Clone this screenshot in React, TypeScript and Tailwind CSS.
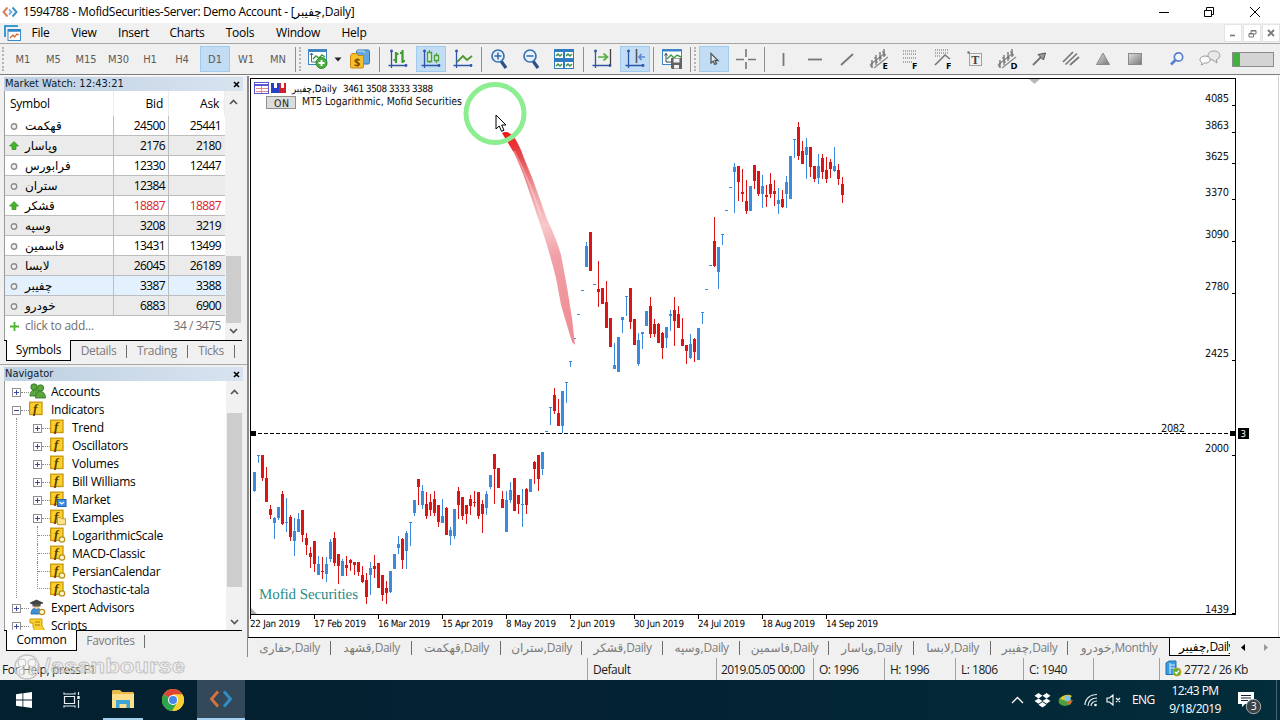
import type { ReactNode } from 'react';
import clsx from 'clsx';

type Candle = [high: number, low: number, top: number, bottom: number, color: 'r' | 'b'];

interface Segment {
  start: number;
  originY: number;
  rows: Candle[];
}

// Candle values are in thirds of a pixel below originY
const segments: Segment[] = [
  {
    start: 0,
    originY: 430,
    rows: [
      [126, 186, 126, 183, 'b'], [76, 100, 76, 79, 'b'], [76, 155, 76, 146, 'r'], [110, 215, 144, 215, 'r'],
      [225, 266, 237, 255, 'r'], [260, 326, 264, 278, 'b'], [232, 272, 232, 266, 'b'], [183, 285, 192, 282, 'r'],
      [205, 307, 276, 280, 'b'], [255, 334, 261, 320, 'r'], [265, 380, 303, 332, 'b'], [250, 308, 268, 308, 'b'],
      [240, 335, 240, 314, 'r'], [309, 376, 323, 344, 'r'], [352, 416, 369, 381, 'r'], [333, 426, 333, 402, 'r'],
      [378, 434, 402, 434, 'b'], [381, 446, 423, 426, 'r'], [380, 455, 402, 432, 'b'], [326, 396, 336, 387, 'b'],
      [306, 408, 323, 399, 'r'], [372, 461, 372, 408, 'r'], [388, 437, 393, 437, 'b'], [378, 437, 405, 413, 'r'],
      [387, 423, 390, 399, 'r'], [396, 434, 396, 405, 'r'], [396, 437, 396, 426, 'r'], [408, 458, 435, 456, 'r'],
      [430, 524, 450, 500, 'r'], [396, 494, 413, 434, 'b'], [375, 444, 407, 416, 'r'], [399, 473, 399, 473, 'r'],
      [435, 512, 435, 494, 'r'], [453, 521, 474, 489, 'r'], [423, 488, 423, 486, 'b'], [372, 416, 372, 416, 'b'],
      [318, 372, 342, 354, 'b'], [323, 416, 326, 389, 'r'], [303, 416, 309, 362, 'b'], [277, 350, 277, 280, 'b'],
      [210, 257, 210, 248, 'b'], [147, 224, 147, 170, 'r'], [165, 236, 182, 224, 'b'], [186, 266, 222, 258, 'r'],
      [192, 257, 216, 240, 'r'], [183, 257, 207, 248, 'r'], [225, 290, 225, 275, 'r'],
    ],
  },
  {
    start: 47,
    originY: 220,
    rows: [
      [836, 908, 888, 908, 'b'], [861, 945, 864, 945, 'r'], [920, 973, 930, 948, 'b'], [867, 956, 867, 947, 'b'],
      [800, 896, 813, 855, 'r'], [831, 900, 831, 887, 'r'], [855, 911, 855, 882, 'r'], [825, 885, 837, 858, 'r'],
      [812, 861, 846, 849, 'r'], [816, 896, 816, 888, 'r'], [840, 938, 852, 882, 'r'], [813, 886, 822, 864, 'b'],
      [765, 807, 765, 801, 'b'], [702, 852, 702, 747, 'r'], [744, 804, 744, 804, 'r'], [812, 864, 837, 864, 'r'],
      [812, 936, 840, 936, 'b'], [786, 848, 810, 840, 'b'], [774, 873, 774, 873, 'r'], [825, 881, 825, 852, 'r'],
      [808, 921, 852, 855, 'b'], [804, 881, 807, 855, 'r'], [777, 815, 777, 815, 'b'], [724, 792, 726, 747, 'r'],
      [705, 812, 705, 776, 'r'], [696, 766, 696, 747, 'b'], [633, 636, 633, 636, 'b'], [561, 614, 561, 564, 'b'],
      [503, 581, 525, 573, 'r'], [536, 618, 579, 618, 'r'], [513, 639, 513, 618, 'b'], [486, 548, 486, 489, 'b'],
      [424, 443, 424, 427, 'b'], [354, 357, 354, 357, 'b'], [282, 285, 282, 285, 'b'], [210, 213, 210, 213, 'b'],
      [66, 140, 78, 140, 'b'], [36, 153, 36, 153, 'r'], [192, 195, 192, 195, 'b'], [123, 262, 207, 216, 'r'],
      [204, 252, 204, 252, 'r'], [182, 324, 246, 324, 'r'], [294, 381, 294, 381, 'r'], [368, 446, 435, 446, 'b'],
      [351, 455, 351, 455, 'b'], [291, 339, 291, 300, 'b'], [228, 289, 228, 231, 'b'], [204, 326, 204, 305, 'r'],
      [297, 375, 297, 375, 'r'], [338, 438, 360, 432, 'b'], [336, 388, 336, 341, 'b'], [273, 318, 273, 318, 'b'],
      [231, 354, 258, 342, 'r'], [297, 351, 312, 342, 'r'], [309, 369, 312, 369, 'r'], [336, 416, 339, 384, 'r'],
      [321, 384, 321, 353, 'b'], [270, 332, 283, 288, 'b'], [231, 377, 270, 303, 'r'], [258, 323, 282, 323, 'r'],
      [294, 377, 357, 377, 'r'], [375, 432, 375, 392, 'r'], [342, 418, 372, 413, 'b'], [354, 426, 357, 396, 'r'],
      [324, 420, 324, 420, 'b'], [276, 312, 276, 279, 'b'], [207, 210, 207, 210, 'b'], [135, 138, 135, 138, 'b'],
    ],
  },
  {
    start: 115,
    originY: 110,
    rows: [
      [321, 470, 393, 468, 'r'], [411, 536, 411, 486, 'b'], [372, 405, 372, 375, 'b'], [300, 303, 300, 303, 'b'],
      [231, 234, 231, 234, 'b'], [159, 309, 171, 186, 'b'], [168, 272, 168, 216, 'r'], [177, 275, 246, 251, 'r'],
      [210, 311, 273, 302, 'r'], [228, 302, 228, 302, 'b'], [165, 238, 165, 213, 'r'], [183, 257, 183, 251, 'r'],
      [194, 293, 228, 252, 'b'], [225, 291, 255, 260, 'r'], [189, 264, 222, 251, 'r'], [210, 288, 243, 252, 'r'],
      [234, 311, 270, 282, 'b'], [240, 293, 267, 291, 'r'], [198, 293, 216, 251, 'b'], [138, 267, 138, 267, 'b'],
      [87, 144, 87, 90, 'b'], [36, 150, 51, 138, 'r'], [93, 161, 123, 161, 'r'], [84, 206, 111, 135, 'b'],
      [111, 201, 111, 171, 'r'], [168, 215, 168, 207, 'r'], [132, 222, 168, 204, 'b'], [132, 206, 144, 186, 'r'],
      [141, 218, 180, 207, 'r'], [147, 204, 156, 177, 'r'], [110, 186, 168, 183, 'b'], [162, 224, 180, 207, 'r'],
      [201, 278, 222, 255, 'r'],
    ],
  },
];

const prices = [
  { label: '4085', y: 98 },
  { label: '3863', y: 125 },
  { label: '3625', y: 156 },
  { label: '3370', y: 192 },
  { label: '3090', y: 234 },
  { label: '2780', y: 286 },
  { label: '2425', y: 353 },
  { label: '2000', y: 448 },
  { label: '1439', y: 609 },
];

const dates = [
  { label: '22 Jan 2019', w: 50 },
  { label: '17 Feb 2019', w: 52 },
  { label: '16 Mar 2019', w: 52 },
  { label: '15 Apr 2019', w: 51 },
  { label: '8 May 2019', w: 50 },
  { label: '2 Jun 2019', w: 45 },
  { label: '30 Jun 2019', w: 50 },
  { label: '24 Jul 2019', w: 47 },
  { label: '18 Aug 2019', w: 53 },
  { label: '14 Sep 2019', w: 52 },
];

const quotes = [
  { name: 'قهکمت', bid: '24500', ask: '25441' },
  { name: 'وپاسار', bid: '2176', ask: '2180', up: true },
  { name: 'فرابورس', bid: '12330', ask: '12447' },
  { name: 'ستران', bid: '12384', ask: '' },
  { name: 'قشکر', bid: '18887', ask: '18887', up: true, red: true },
  { name: 'وسپه', bid: '3208', ask: '3219' },
  { name: 'فاسمین', bid: '13431', ask: '13499' },
  { name: 'لابسا', bid: '26045', ask: '26189' },
  { name: 'چفیبر', bid: '3387', ask: '3388', selected: true },
  { name: 'خودرو', bid: '6883', ask: '6900' },
];

const indicators = [
  { name: 'Trend', leaf: false },
  { name: 'Oscillators', leaf: false },
  { name: 'Volumes', leaf: false },
  { name: 'Bill Williams', leaf: false },
  { name: 'Market', leaf: false, badge: 'market' },
  { name: 'Examples', leaf: false, badge: 'folder' },
  { name: 'LogarithmicScale', leaf: true, badge: 'dot' },
  { name: 'MACD-Classic', leaf: true, badge: 'dot' },
  { name: 'PersianCalendar', leaf: true, badge: 'dot' },
  { name: 'Stochastic-tala', leaf: true, badge: 'dot', last: true },
];

const chartTabs = [
  { label: 'حفاری,Daily', width: 'w-[83px]' },
  { label: 'قشهد,Daily', width: 'w-[81px]' },
  { label: 'قهکمت,Daily', width: 'w-[89px]' },
  { label: 'ستران,Daily', width: 'w-[81px]' },
  { label: 'قشکر,Daily', width: 'w-[81px]' },
  { label: 'وسپه,Daily', width: 'w-[77px]' },
  { label: 'فاسمین,Daily', width: 'w-[89px]' },
  { label: 'وپاسار,Daily', width: 'w-[85px]' },
  { label: 'لابسا,Daily', width: 'w-[77px]' },
  { label: 'چفیبر,Daily', width: 'w-[77px]' },
  { label: 'خودرو,Monthly', width: 'w-[101px]' },
];

const SLATE = '#3a4a9a';

function Slot({ w = 'w-8', active = false, children }: { w?: string; active?: boolean; children: ReactNode }) {
  return (
    <div className={clsx('flex h-full shrink-0 items-center justify-center', w)}>
      <div
        className={clsx(
          'flex h-[26px] w-[30px] items-center justify-center',
          active && 'border border-[#9fcbee] bg-[#c1dcf3]'
        )}
      >
        {children}
      </div>
    </div>
  );
}

function Sep({ w }: { w: string }) {
  return (
    <div className={clsx('flex shrink-0 justify-center', w)}>
      <div className="h-[25px] w-px bg-[#8f8f8f]" />
    </div>
  );
}

function Grip() {
  return <div className="h-[24px] w-[3px] shrink-0 border-l-2 border-dotted border-[#b4b4b4]" />;
}

function Icon({ size = 20, children }: { size?: number; children: ReactNode }) {
  return (
    <svg width={size} height={size} viewBox={`0 0 ${size} ${size}`} fill="none" className="shrink-0">
      {children}
    </svg>
  );
}

// Blue L-shaped axes shared by the chart-type buttons
function Axes() {
  return (
    <g stroke="#2f55a8" strokeWidth="1.3" fill="#2f55a8">
      <path d="M3.5 1.5V19M.5 16.5H18" />
      <circle cx="3.5" cy="2" r=".8" />
      <circle cx="18" cy="16.5" r=".8" />
    </g>
  );
}

function MetaLogo({ size }: { size: number }) {
  return (
    <svg width={size} height={size} viewBox="0 0 24 24" fill="none" strokeWidth="2.800">
      <path d="M9 4.500 2.500 12 9 19.500" stroke="#d9713f" />
      <path d="M15 4.500 21.500 12 15 19.500" stroke="#2f8fc8" />
    </svg>
  );
}

function TitleBar() {
  return (
    <div className="flex h-[23px] shrink-0 items-center bg-white">
      <svg width="16" height="12" viewBox="0 0 16 12" fill="none" className="ml-[2px]" strokeWidth="1.9">
        <path d="M5.500 1.500 1.500 6l4 4.500" stroke="#e27a50" />
        <path d="M10.500 1.500 14.500 6l-4 4.500" stroke="#3b8fc6" />
        <path d="M7 3.500 9.500 6 7 8.500" stroke="#76b2d8" />
      </svg>
      <span className="ml-[5px] whitespace-nowrap text-[12px] tracking-[-0.026em]">
        1594788 - MofidSecurities-Server: Demo Account - [چفیبر,Daily]
      </span>
      <div className="ml-auto flex items-center">
        <svg width="120" height="20" viewBox="1148 0 120 20" fill="none" stroke="#000">
          <path d="M1159 10.500h10" />
          <path d="M1204.500 8.500h7v6h-7zM1206.500 8v-2.500h7v7h-2" />
          <path d="M1250 5l10 10M1260 5l-10 10" />
        </svg>
        <div className="w-[12px]" />
      </div>
    </div>
  );
}

function MenuBar() {
  const items = [
    { label: 'File', width: 'w-[35px]' },
    { label: 'View', width: 'w-[52px]' },
    { label: 'Insert', width: 'w-[47px]' },
    { label: 'Charts', width: 'w-[60px]' },
    { label: 'Tools', width: 'w-[46px]' },
    { label: 'Window', width: 'w-[70px]' },
    { label: 'Help', width: 'w-[42px]' },
  ];
  return (
    <div className="flex h-[21px] shrink-0 items-center border-b border-[#a5a5a5] bg-[#f0f0f0]">
      <svg width="18" height="17" viewBox="0 0 18 17" fill="none" className="ml-[4px]">
        <path d="M1 12V1h13" stroke="#3a9ad2" strokeWidth="2" />
        <rect x="4" y="4.500" width="12.500" height="11" fill="#fff" stroke="#3a8cc8" />
        <path d="M4 5.500h12.500" stroke="#2f86c6" strokeWidth="2.500" />
        <path d="m6 13 3-3 1.500 2L13 9l2 1" stroke="#d86a3a" strokeWidth="1.300" />
      </svg>
      <div className="flex pl-[1px] text-[12px] tracking-[-0.02em]">
        {items.map((item) => (
          <span key={item.label} className={clsx('text-center', item.width)}>
            {item.label}
          </span>
        ))}
      </div>
      <div className="ml-auto flex gap-px">
        <div className="flex h-[18px] w-[18px] items-center justify-center border border-[#e4e4e4] bg-white">
          <svg width="8" height="8" fill="none" stroke="#777" strokeWidth="1.600"><path d="M1 6.500h5" /></svg>
        </div>
        <div className="flex h-[18px] w-[18px] items-center justify-center border border-[#e4e4e4] bg-white">
          <svg width="9" height="9" fill="none" stroke="#777"><path d="M1 4.500h4.500V8H1zM3 4V1.500h5V5H6M3 2h5M1 5h4" /></svg>
        </div>
        <div className="flex h-[18px] w-[18px] items-center justify-center border border-[#e4e4e4] bg-white">
          <svg width="8" height="8" fill="none" stroke="#777" strokeWidth="1.800"><path d="m1 1 6 6M7 1 1 7" /></svg>
        </div>
      </div>
    </div>
  );
}

function EquiDistant({ letter }: { letter: string }) {
  return (
    <Icon size={22}>
      <path d="M2 17 17 5M6 20 20 9" stroke="#8a8a8a" strokeWidth="1.300" />
      <path d="M4 12v8M2 18h2M8 7v10M6 10h2M8 14h2M12 4v9M12 10h2M16 1v8M14 4h2M16 7h2" stroke="#666" strokeWidth="1.200" />
      <text x="14.500" y="20.500" fontSize="9.500" fontWeight="bold" fill="#000">{letter}</text>
    </Icon>
  );
}

function Toolbar() {
  const frames = [
    { label: 'M1', width: 'w-[30px]' },
    { label: 'M5', width: 'w-[31px]' },
    { label: 'M15', width: 'w-[34px]' },
    { label: 'M30', width: 'w-[31px]' },
    { label: 'H1', width: 'w-[32px]' },
    { label: 'H4', width: 'w-[32px]' },
  ];
  return (
    <div className="flex h-[31px] shrink-0 items-center border-b border-[#7c7c7c] bg-[#f0f0f0]">
      <div className="w-[2px]" />
      <Grip />
      <div className="flex items-center pl-[3px] font-['DejaVu_Sans_Condensed','DejaVu_Sans',sans-serif] text-[11px] text-[#5a5a5a]">
        {frames.map((f) => (
          <span key={f.label} className={clsx('pt-[2px] text-center', f.width)}>{f.label}</span>
        ))}
        <span className="ml-[2px] flex h-[26px] w-[30px] items-center justify-center border border-[#9fcbee] bg-[#c1dcf3] pt-[3px]">D1</span>
        <span className="w-[32px] pt-[2px] text-center">W1</span>
        <span className="w-[32px] pt-[2px] text-center">MN</span>
      </div>
      <Sep w="w-[2px]" />
      <div className="w-[3px]" />
      <Grip />
      <Slot w="w-[32px]">
        <Icon size={22}>
          <rect x="1.500" y="1.500" width="18" height="15" fill="#fff" stroke="#3d85c4" />
          <path d="M1 3h19" stroke="#3d85c4" strokeWidth="2" />
          <path d="M4.500 5v9h8M3 7l1.500-2L6 7" stroke="#4a6a90" />
          <path d="m6 11 3-3 3 2 3-3 3 2" stroke="#3c9a3c" strokeWidth="1.400" />
          <circle cx="14.500" cy="15" r="5.500" fill="#4cae3f" stroke="#2f8a2c" />
          <path d="M11.500 15h6M14.500 12v6" stroke="#fff" strokeWidth="1.800" />
        </Icon>
      </Slot>
      <svg width="8" height="5" viewBox="0 0 8 5"><path d="M.5.5h7L4 4.500z" fill="#222" /></svg>
      <Slot w="w-[36px]">
        <Icon size={22}>
          <rect x="7.500" y="2" width="13" height="14" rx="1.500" fill="#64a8e0" stroke="#2f74b4" />
          <path d="M8 3h7l1 2" stroke="#c6e2f8" />
          <path d="M1.500 7.500 3 5.500h5l1 2h5.500V19a1 1 0 0 1-1 1h-11a1 1 0 0 1-1-1z" fill="#f5c02c" stroke="#c58a12" />
          <text x="5" y="18" fontSize="11" fontWeight="bold" fill="#7a4a00">$</text>
        </Icon>
      </Slot>
      <Sep w="w-[3px]" />
      <div className="w-px" />
      <Slot>
        <Icon>
          <Axes />
          <path d="M8 3v11M8 11H5.500M8 5h2.500M14.500 1v13M14.500 4H12M14.500 12H17" stroke="#3f9b2f" strokeWidth="2.200" />
        </Icon>
      </Slot>
      <div className="w-px" />
      <Slot active>
        <Icon>
          <Axes />
          <path d="M8.500 1v13M15.500 4v10" stroke="#4a9f3a" strokeWidth="1.200" />
          <path d="M6.500 3.500h4v9h-4zM13.500 6.500h4v5h-4z" fill="#d8f0d0" stroke="#4a9f3a" strokeWidth="1.300" />
        </Icon>
      </Slot>
      <Slot>
        <Icon>
          <Axes />
          <path d="m4 13 6-6 4 4 5-4" stroke="#4a9a30" strokeWidth="1.800" />
        </Icon>
      </Slot>
      <Sep w="w-[4px]" />
      <Slot>
        <Icon>
          <path d="m12 12 5 7" stroke="#2d4f86" strokeWidth="3.200" />
          <circle cx="9" cy="7" r="6" fill="#e6f2fb" stroke="#3972b4" strokeWidth="1.700" />
          <path d="M5.500 7h7M9 3.500v7" stroke="#3466a8" strokeWidth="1.500" />
        </Icon>
      </Slot>
      <Slot>
        <Icon>
          <path d="m12 12 5 7" stroke="#2d4f86" strokeWidth="3.200" />
          <circle cx="9" cy="7" r="6" fill="#e6f2fb" stroke="#3972b4" strokeWidth="1.700" />
          <path d="M5.500 7h7" stroke="#3466a8" strokeWidth="1.500" />
        </Icon>
      </Slot>
      <Slot w="w-[33px]">
        <Icon>
          <rect x=".5" y=".5" width="19" height="19" fill="#fff" stroke="#2f7cc0" />
          <path d="M0 2h20M0 12h20M10 0v20M0 10h20" stroke="#2f7cc0" strokeWidth="2" />
          <path d="m2 7 2-2 2 2 2-2M12 7l2-2 2 2 2-2M2 17l2-2 2 2 2-2M12 17l2-2 2 2 2-2" stroke="#3d8f4a" strokeWidth="1.500" />
        </Icon>
      </Slot>
      <Sep w="w-[6px]" />
      <Slot>
        <Icon>
          <Axes />
          <path d="M18.500 0v16" stroke="#444" strokeWidth="1.300" />
          <path d="M6 8h8M11.500 4.500 15.500 8l-4 3.500" stroke="#55b045" strokeWidth="1.700" />
        </Icon>
      </Slot>
      <Slot w="w-[34px]" active>
        <Icon>
          <Axes />
          <path d="M11.500 0v14" stroke="#556" strokeWidth="1.600" />
          <path d="M20 8h-5M16.500 5 14 8l2.500 3" stroke="#5a86d0" strokeWidth="1.600" />
        </Icon>
      </Slot>
      <Sep w="w-[3px]" />
      <Slot w="w-[34px]">
        <Icon>
          <rect x=".5" y=".5" width="19" height="15" fill="#fff" stroke="#3d85c4" />
          <path d="M0 1.500h20" stroke="#3d85c4" strokeWidth="2" />
          <path d="M4 4v9h5M2.500 6.500 4 4.500l1.500 2" stroke="#345" />
          <path d="m5 10 4-4 3 3 3-3 4 2" stroke="#3d9a3f" strokeWidth="1.400" />
          <path d="M9 9h11v11H10l-1-1z" fill="#636363" />
          <path d="M11.500 9.500h6v4h-6zM12 16h5v3.500h-5z" fill="#f2f2f2" />
        </Icon>
      </Slot>
      <Sep w="w-[3px]" />
      <div className="w-[2px]" />
      <Grip />
      <div className="w-px" />
      <Slot active>
        <Icon size={16}>
          <path d="M5 2.500v9.500l2.200-1.800 1.600 3.300 1.700-.8L9 9.500h3z" fill="#e8edf3" stroke="#4d565e" strokeWidth="1.300" />
        </Icon>
      </Slot>
      <Slot w="w-[31px]">
        <Icon>
          <path d="M0 10.500h8M12 10.500h8M10 0v8M10 13v7" stroke="#777" strokeWidth="1.600" />
        </Icon>
      </Slot>
      <Sep w="w-[6px]" />
      <Slot><Icon><path d="M10.500 4v13" stroke="#777" strokeWidth="1.800" /></Icon></Slot>
      <Slot><Icon><path d="M3 10.500h14" stroke="#777" strokeWidth="1.800" /></Icon></Slot>
      <Slot><Icon><path d="M4 16 16 5" stroke="#777" strokeWidth="1.800" /></Icon></Slot>
      <Slot><EquiDistant letter="E" /></Slot>
      <Slot>
        <Icon size={22}>
          <path d="M3 3h14M3 6h14M3 10h14M3 14h9" stroke="#666" strokeDasharray="1 1" />
          <text x="12" y="20.500" fontSize="9.500" fontWeight="bold" fill="#000">F</text>
        </Icon>
      </Slot>
      <Slot>
        <Icon size={22}>
          <path d="M3 2h14M3 5h14M3 8h6" stroke="#666" strokeDasharray="1 1" />
          <path d="M3 17 13 7l5 4" stroke="#777" strokeWidth="1.600" />
          <text x="14" y="20.500" fontSize="9.500" fontWeight="bold" fill="#000">F</text>
        </Icon>
      </Slot>
      <Slot>
        <Icon size={18}>
          <rect x="3.500" y="3.500" width="12" height="12" stroke="#555" strokeDasharray="1 1" />
          <rect x="1.500" y="1.500" width="2" height="2" fill="#555" />
          <text x="5.300" y="14" fontSize="12" fontWeight="bold" fontFamily="Liberation Serif" fill="#444">T</text>
        </Icon>
      </Slot>
      <Slot><EquiDistant letter="D" /></Slot>
      <Slot>
        <Icon size={18}>
          <path d="M3 15 11 7" stroke="#777" strokeWidth="2" />
          <path d="M8 4.500 15.500 3 13.500 10z" fill="#999" stroke="#555" />
        </Icon>
      </Slot>
      <Slot>
        <Icon size={18}>
          <path d="M1 12 11 2M3.500 14.500 15 3.500M8 15l9-8" stroke="#777" strokeWidth="1.700" />
        </Icon>
      </Slot>
      <Slot>
        <Icon size={18}>
          <path d="M9 3 15.500 14.500h-13z" fill="url(#grey)" stroke="#8a8a8a" />
        </Icon>
      </Slot>
      <Slot>
        <Icon size={18}>
          <defs>
            <linearGradient id="grey" x1="0" y1="0" x2="1" y2="1">
              <stop offset="0" stopColor="#e0e0e0" />
              <stop offset="1" stopColor="#777" />
            </linearGradient>
          </defs>
          <rect x="2.500" y="3.500" width="13" height="11" fill="url(#grey)" stroke="#8a8a8a" />
        </Icon>
      </Slot>
      <div className="w-[10px]" />
      <Slot>
        <Icon size={18}>
          <path d="M7.500 10 3 14.500" stroke="#5a80cc" strokeWidth="2.600" />
          <circle cx="10.500" cy="7" r="4.200" fill="#f3f8ff" stroke="#5a80cc" strokeWidth="1.700" />
        </Icon>
      </Slot>
      <Slot w="w-[34px]">
        <Icon size={22}>
          <path d="M15 3c-4 0-6 2-6 4.500S11 12 14 12l4 3-.5-3.500c2-.7 3.300-2 3.300-4C20.800 5 19 3 15 3z" fill="#e8e8e8" stroke="#9a9a9a" />
          <path d="M6 8c-3 0-5 1.600-5 3.700 0 1.300.8 2.400 2 3L2.500 17l3-1.800c3.500 0 5.700-1.300 5.700-3.500S9 8 6 8z" fill="#fafafa" stroke="#9a9a9a" />
        </Icon>
      </Slot>
      <div className="ml-[5px] flex h-[15px] w-[42px] shrink-0 border border-[#8c8c8c] bg-[#d4d4d4]">
        <div className="w-[7px] bg-[#3fb13c]" />
      </div>
    </div>
  );
}

function PanelHeader({ title }: { title: string }) {
  return (
    <div className="mx-[4px] flex h-[14px] shrink-0 items-center justify-between bg-gradient-to-r from-[#bed0e2] to-[#d8e3ef] pl-px pr-[3px] font-['DejaVu_Sans_Condensed','DejaVu_Sans',sans-serif] text-[11px] text-[#0c1c2c]">
      <span className="whitespace-nowrap">{title}</span>
      <svg width="7" height="7" viewBox="0 0 7 7" stroke="#000" strokeWidth="1.600"><path d="m1 1 5 5M6 1 1 6" /></svg>
    </div>
  );
}

function Chevron({ up = false }: { up?: boolean }) {
  return (
    <svg width="9" height="6" viewBox="0 0 9 6" fill="none" stroke="#555" strokeWidth="1.700">
      <path d={up ? 'M1 5l3.500-3.500L8 5' : 'M1 1l3.500 3.500L8 1'} />
    </svg>
  );
}

function MarketWatch() {
  return (
    <div className="flex h-[289px] shrink-0 flex-col border-b border-[#a8a8a8] pt-px">
      <PanelHeader title="Market Watch: 12:43:21" />
      <div className="ml-[4px] flex h-[250px] w-[238px] shrink-0 border-b border-black bg-white">
        <div className="w-[221px] border-l border-[#9a9a9a] text-[12px] tracking-[-0.02em]">
          <div className="flex h-[25px] items-center">
            <span className="w-[108px] pl-[5px]">Symbol</span>
            <span className="h-full w-[55px] border-l border-[#ececec] pr-[5px] pt-[4px] text-right">Bid</span>
            <span className="h-full w-[57px] border-x border-[#ececec] pr-[5px] pt-[4px] text-right">Ask</span>
          </div>
          {quotes.map((q, i) => (
            <div
              key={q.name}
              className={clsx(
                'flex h-[20px] items-center border-b border-[#bdbdbd] tracking-[-0.05em]',
                q.selected ? 'bg-[#e2f1fd]' : i % 2 ? 'bg-[#ebebeb]' : 'bg-white',
                q.red && 'text-[#e01c24]'
              )}
            >
              <div className="flex w-[108px] items-center text-black">
                <svg width="10" height="10" viewBox="0 0 10 10" className="ml-[4px]">
                  {q.up ? (
                    <path d="M5 .5 9.500 5H7v3.500H3V5H.5z" fill="#44b42c" stroke="#2e8a20" strokeWidth=".7" />
                  ) : (
                    <circle cx="5" cy="5.500" r="2.700" fill="#f2f2f2" stroke="#8b8b8b" strokeWidth="1.400" />
                  )}
                </svg>
                <span className="ml-[6px] text-[12px] leading-[18px] tracking-normal">{q.name}</span>
              </div>
              <span className="h-[19px] w-[55px] border-l border-[#bdbdbd] pr-[3px] text-right leading-[20px]">{q.bid}</span>
              <span className="h-[19px] w-[56px] border-l border-[#bdbdbd] pr-[3px] text-right leading-[20px]">{q.ask}</span>
            </div>
          ))}
          <div className="flex h-[20px] items-center justify-between pr-[4px] text-[#6f6f6f]">
            <div className="flex items-center">
              <svg width="9" height="9" viewBox="0 0 9 9" className="ml-[5px]" stroke="#4cb52f" strokeWidth="1.800"><path d="M4.500 0v9M0 4.500h9" /></svg>
              <span className="ml-[6px]">click to add...</span>
            </div>
            <span className="tracking-[-0.04em]">34 / 3475</span>
          </div>
        </div>
        <div className="flex w-[17px] flex-col items-center bg-[#f1f1f1]">
          <div className="pt-[8px] leading-[0]"><Chevron up /></div>
          <div className="mt-[151px] h-[67px] w-[15px] bg-[#cdcdcd]" />
          <div className="mt-[5px] leading-[0]"><Chevron /></div>
        </div>
      </div>
      <div className="flex h-[20px] pl-[6px] text-[12px] tracking-[-0.03em] text-[#7b7b7b]">
        <div className="-mt-px flex w-[65px] items-center justify-center border-x border-b border-black bg-white tracking-[-0.02em] text-black">Symbols</div>
        <TabLabel w="w-[56px]">Details</TabLabel>
        <TabLabel w="w-[61px]">Trading</TabLabel>
        <TabLabel w="w-[47px]">Ticks</TabLabel>
      </div>
    </div>
  );
}

function TabLabel({ w, children }: { w: string; children: ReactNode }) {
  return (
    <div className={clsx('flex shrink-0 items-center text-[12px]', w)}>
      <span className="grow text-center leading-[18px]">{children}</span>
      <div className="h-[13px] w-px bg-[#6f6f6f]" />
    </div>
  );
}

function Expander({ open = false }: { open?: boolean }) {
  return (
    <svg width="9" height="9" viewBox="0 0 9 9" fill="none" className="relative shrink-0">
      <rect x=".5" y=".5" width="8" height="8" fill="#fff" stroke="#919191" />
      <path d={open ? 'M2 4.500h5' : 'M2 4.500h5M4.500 2v5'} stroke={SLATE} />
    </svg>
  );
}

function FIcon({ badge }: { badge?: string }) {
  return (
    <svg width="16" height="16" viewBox="0 0 16 16" className="shrink-0 overflow-visible">
      <rect x=".7" y="1.200" width="12.300" height="12.300" fill="#fbd12c" stroke="#c9960c" strokeWidth="1.300" />
      <text x="4" y="11.500" fontFamily="Liberation Serif" fontSize="13" fontStyle="italic" fontWeight="bold" fill="#5a3a00">f</text>
      {badge === 'dot' && <circle cx="12" cy="12.500" r="2.700" fill="#fff6cf" stroke="#b5901c" strokeWidth="1.200" />}
      {badge === 'market' && (
        <g>
          <rect x="7.500" y="8.500" width="8.500" height="7" fill="#3f8be8" stroke="#2563b8" />
          <path d="m9.500 11 2.300 2 2.300-2" fill="none" stroke="#fff" strokeWidth="1.200" />
        </g>
      )}
      {badge === 'folder' && <path d="M7.500 8.500h3l1 1.200h4v6h-8z" fill="#ffe28a" stroke="#c59a2c" />}
    </svg>
  );
}

function RootRow({ icon, label, open = false }: { icon: ReactNode; label: string; open?: boolean }) {
  return (
    <div className="flex h-[18px] shrink-0 items-center">
      <div className="flex w-[24px] items-center pl-[7px] pt-[2px]">
        <Expander open={open} />
        <div className="w-[8px] shrink-0 border-t border-dotted border-[#8b8b8b]" />
      </div>
      <div className="flex h-[18px] w-[22px] shrink-0 items-center">{icon}</div>
      <span className="whitespace-nowrap leading-[17px]">{label}</span>
    </div>
  );
}

function Navigator() {
  return (
    <div className="flex grow flex-col pt-[2px]">
      <PanelHeader title="Navigator" />
      <div className="ml-[4px] flex h-[250px] w-[238px] shrink-0 border-b border-black bg-white">
        <div className="flex w-[222px] flex-col overflow-hidden border-l border-[#9a9a9a] pt-px text-[12px] tracking-[-0.02em]">
          <RootRow
            label="Accounts"
            icon={
              <svg width="17" height="16" viewBox="0 0 17 16" fill="#58a63c" stroke="#2f6f22" strokeWidth=".8">
                <circle cx="5" cy="4" r="3.200" />
                <path d="M1 13c0-4 2-6 5-6s5 2 5 6z" />
                <circle cx="11.500" cy="5" r="3.200" />
                <path d="M6.500 15c0-4 2-6.500 5-6.500s5 2.500 5 6.500z" />
              </svg>
            }
          />
          <RootRow label="Indicators" icon={<FIcon />} open />
          <div className="ml-[11px] shrink-0 border-l border-dotted border-[#8b8b8b]">
            {indicators.map((it) => (
              <div key={it.name} className="flex h-[18px] items-center">
                <div className="flex h-full w-[33px] items-center pl-[16px]">
                  {it.leaf ? (
                    <div className={clsx('ml-[4px] flex w-[13px] border-l border-dotted border-[#8b8b8b]', it.last ? 'h-[9px] self-start border-b' : 'h-full items-center')}>
                      {!it.last && <div className="grow border-t border-dotted border-[#8b8b8b]" />}
                    </div>
                  ) : (
                    <div className="flex items-center pt-[2px]">
                      <Expander />
                      <div className="w-[8px] border-t border-dotted border-[#8b8b8b]" />
                    </div>
                  )}
                </div>
                <div className="flex w-[22px]"><FIcon badge={it.badge} /></div>
                <span className="whitespace-nowrap leading-[17px]">{it.name}</span>
              </div>
            ))}
          </div>
          <RootRow
            label="Expert Advisors"
            icon={
              <svg width="17" height="17" viewBox="0 0 17 17">
                <path d="M2 15c0-4 2-6 5-6s6 2 6 6z" fill="#3f8fd8" stroke="#20609c" strokeWidth=".8" />
                <circle cx="7.500" cy="7" r="3" fill="#f0c890" />
                <path d="M1 4 7.500 1 14 4 7.500 6.500z" fill="#444" stroke="#222" strokeWidth=".6" />
                <path d="M3.500 5v2.500h8V5" fill="#555" />
                <circle cx="13" cy="13" r="2.700" fill="#fff6cf" stroke="#b5901c" strokeWidth="1.200" />
              </svg>
            }
          />
          <RootRow
            label="Scripts"
            icon={
              <svg width="17" height="16" viewBox="0 0 17 16" fill="#fbd12c" stroke="#c9960c">
                <path d="M1 2h12v7l3 5H6l-2-4V6H1z" />
                <path d="M6 5h5M6 8h5" stroke="#a67a10" />
              </svg>
            }
          />
        </div>
        <div className="flex w-[16px] flex-col items-center bg-[#f1f1f1]">
          <div className="pt-[8px] leading-[0]"><Chevron up /></div>
          <div className="mt-[18px] h-[174px] w-[15px] bg-[#cdcdcd]" />
          <div className="mt-[32px] leading-[0]"><Chevron /></div>
        </div>
      </div>
      <div className="flex h-[20px] shrink-0 pl-[6px] text-[12px] tracking-[-0.02em] text-[#7b7b7b]">
        <div className="-mt-px flex w-[71px] items-center justify-center border-x border-b border-black bg-white text-black">Common</div>
        <TabLabel w="w-[68px]">Favorites</TabLabel>
      </div>
    </div>
  );
}

function Chart() {
  return (
    <svg
      width="1032"
      height="561"
      viewBox="248 76 1032 561"
      className="block bg-white font-['DejaVu_Sans_Condensed','DejaVu_Sans',sans-serif]"
      textRendering="geometricPrecision"
    >
      <defs>
        <linearGradient id="trail" gradientUnits="userSpaceOnUse" x1="505" y1="132" x2="573" y2="345">
          <stop offset="0" stopColor="#f01616" />
          <stop offset=".12" stopColor="#e6484c" />
          <stop offset=".3" stopColor="#f0a0a4" />
          <stop offset=".45" stopColor="#f8c8cb" />
          <stop offset=".6" stopColor="#f0a0a6" />
          <stop offset="1" stopColor="#f08a92" />
        </linearGradient>
      </defs>
      <path d="M248.500 76v561" stroke="#8a8a8a" />
      <path d="M250.500 78.500H1235.500V614.500H250.500z" fill="none" stroke="#000" shapeRendering="crispEdges" />
      <path d="M1029 79h11l-5.500 5z" fill="#b8b8b8" />
      <path d="M251 608v6h6z" fill="#b0b0b0" />
      <path d="M1278.500 76v561" stroke="#d0d0d0" />

      {segments.map((seg) =>
        seg.rows.map(([high, low, top, bottom, color], i) => {
          const x = 254 + (seg.start + i) * 4;
          const fill = color === 'r' ? '#dc1414' : '#3c8ade';
          return (
            <g key={x} fill={fill} shapeRendering="crispEdges">
              <rect x={x} y={Math.round(seg.originY + high / 3)} width="1" height={Math.max(1, Math.round((low - high) / 3))} />
              <rect x={x - 1} y={Math.round(seg.originY + top / 3)} width="3" height={Math.max(1, Math.round((bottom - top) / 3))} />
            </g>
          );
        })
      )}

      {prices.map((p) => (
        <g key={p.label}>
          <text x="1229" y={p.y + 4} textAnchor="end" fontSize="11" textLength="24" fill="#111">{p.label}</text>
          <path d={`M1232 ${Math.min(p.y + 7.5, 613.5)}h3`} stroke="#000" />
        </g>
      ))}
      {dates.map((d, i) => (
        <g key={d.label}>
          <path d={`M${250.5 + i * 64} 614v5`} stroke="#000" />
          <text x={250 + i * 64} y="627" fontSize="9.800" textLength={d.w} fill="#000">{d.label}</text>
        </g>
      ))}

      <path d="M252 433.500H1232" stroke="#000" strokeDasharray="4 2" shapeRendering="crispEdges" />
      <path d="M250 431h6v5h-6zM1230 431h5v5h-5zM1238 428h11v11h-11z" fill="#000" />
      <text x="1240.500" y="437" fontSize="9.500" fill="#fff">3</text>
      <text x="1161" y="432" fontSize="11" textLength="24" fill="#111">2082</text>

      <g shapeRendering="crispEdges">
        <rect x="254.500" y="82.500" width="14" height="11" fill="#fff" stroke="#5a5ad0" />
        <path d="M255 84.500h13" stroke="#5a5ad0" strokeWidth="2" />
        <path d="M256 88.500h12M256 91.500h12M261.500 86v7" stroke="#e08a8a" />
        <path d="M271 83h3v5h3v-5h2v10h-8z" fill="#2440c8" />
        <path d="M279 83h2v5h3v-5h2v10h-7z" fill="#d02030" />
      </g>
      <text x="292" y="92" fontSize="9.800" textLength="45" lengthAdjust="spacingAndGlyphs">چفیبر,Daily</text>
      <text x="343" y="92" fontSize="9.800" textLength="90">3461 3508 3333 3388</text>
      <rect x="266.500" y="96.500" width="29" height="12" fill="#dcdcdc" stroke="#909090" />
      <text x="274" y="107" fontSize="10.500" textLength="15" fill="#222">ON</text>
      <text x="302" y="105" fontSize="11" textLength="160" lengthAdjust="spacingAndGlyphs" fill="#111">MT5 Logarithmic, Mofid Securities</text>
      <text x="259" y="599" fontSize="15" textLength="99" fontFamily="Liberation Serif" fill="#2c8a86">Mofid Securities</text>

      <path d="M502 133Q508 130 514 137Q520 146 524 158L533 180L547 219Q557 240 561 255L567 287L572 318L575 345L572 342Q566 322 561 305L556 278Q548 246 539 221L526 182Q520 165 514 153Q508 143 502 133z" fill="url(#trail)" />
      <path d="M514 151Q532 186 541 217" fill="none" stroke="#fff" strokeOpacity=".3" strokeWidth="2" />
      <circle cx="495" cy="113.500" r="29" fill="none" stroke="#8cee90" strokeWidth="5" />
      <path d="M496 115v14l3.200-3 2.400 5.300 2.400-1-2.300-5.300h4.300z" fill="#fff" stroke="#000" strokeWidth="1" />
    </svg>
  );
}

function ChartTabs() {
  return (
    <div className="flex h-[20px] shrink-0 items-start overflow-hidden border-t border-black bg-[#f0f0f0] text-[12px] tracking-[-0.04em] text-[#7b7b7b]">
      {chartTabs.map((t, i) => (
        <div key={t.label} className={clsx('flex h-[19px] shrink-0 items-center', t.width)}>
          <span className="grow whitespace-nowrap pl-px text-center leading-[19px]">{t.label}</span>
          {i < chartTabs.length - 1 && <div className="h-[14px] w-px bg-[#6f6f6f]" />}
        </div>
      ))}
      <div className="-mt-px h-[19px] w-[61px] shrink-0 overflow-hidden whitespace-nowrap border-b border-l border-black bg-white pl-[9px] leading-[19px] tracking-[-0.05em] text-black">
        چفیبر,Daily
      </div>
      <svg width="50" height="19" viewBox="0 0 50 19">
        <path d="M15 6v7l-4-3.500z" fill="#000" />
        <path d="M34 6v7l4-3.500z" fill="#999" />
      </svg>
    </div>
  );
}

function StatusBar() {
  const cells = [
    { text: 'Default', width: 'w-[129px]' },
    { text: '2019.05.05 00:00', width: 'w-[97px]' },
    { text: 'O: 1996', width: 'w-[71px]' },
    { text: 'H: 1996', width: 'w-[71px]' },
    { text: 'L: 1806', width: 'w-[68px]' },
    { text: 'C: 1940', width: 'w-[70px]' },
    { text: '', width: 'w-[66px]' },
  ];
  return (
    <div className="relative flex h-[23px] shrink-0 items-center bg-[#f0f0f0] text-[12px] text-[#1a1a1a]">
      <span className="w-[587px] pl-[2px] pt-[2px] tracking-[-0.03em]">For Help, press F1</span>
      {cells.map((c, i) => (
        <div
          key={c.text}
          className={clsx(
            'h-[22px] shrink-0 whitespace-nowrap border-l border-[#a0a0a0] pt-[3px]',
            i === 1 ? 'pl-[4px] tracking-[-0.06em]' : 'pl-[5px] tracking-[-0.04em]',
            c.width
          )}
        >
          {c.text}
        </div>
      ))}
      <div className="flex h-[22px] grow items-center whitespace-nowrap border-l border-[#a0a0a0] pl-[5px] tracking-[-0.04em]">
        <svg width="17" height="17" viewBox="0 0 17 17">
          <path d="M1 3 4 1h7v11l-3 2.500H1z" fill="#3a9ce0" stroke="#1f6fb0" />
          <path d="M5 3v11M5 5h5M5 8h5" stroke="#d6ecfb" fill="none" />
          <circle cx="12" cy="12" r="4" fill="#5fae35" stroke="#c8a820" />
          <path d="m10 12 1.500 1.500L14 10.500" stroke="#fff" strokeWidth="1.300" fill="none" />
        </svg>
        <span className="ml-[2px] pt-[2px]">2772 / 26 Kb</span>
      </div>
      <svg width="190" height="28" viewBox="0 0 190 28" fill="none" className="absolute -top-[5px] left-[8px]">
        <g stroke="#c3c3c3" fill="#f7f7f7" fillOpacity=".4">
          <circle cx="19" cy="15" r="12" strokeWidth="1.500" />
          <circle cx="14" cy="11" r="4" />
          <circle cx="24" cy="11" r="4" />
          <circle cx="14" cy="20" r="3" />
          <circle cx="24" cy="20" r="3" />
        </g>
        <text x="36" y="21" fontFamily="Liberation Sans" fontWeight="bold" fontSize="20" textLength="141" lengthAdjust="spacingAndGlyphs" fill="#f2f2f2" fillOpacity=".4" stroke="#c0c0c0" strokeWidth=".8">
          /asanbourse
        </text>
      </svg>
    </div>
  );
}

function Taskbar() {
  return (
    <div className="flex h-[40px] shrink-0 bg-gradient-to-r from-[#03202f] via-[#032233] to-[#032d3b] text-white">
      <div className="flex w-[48px] items-center justify-center">
        <svg width="16" height="16" viewBox="0 0 16 16" fill="#fff"><path d="M0 2.200 6.500 1.300v6.300H0zM7.300 1.200 16 0v7.600H7.300zM0 8.400h6.500v6.300L0 13.800zM7.300 8.400H16V16l-8.700-1.200z" /></svg>
      </div>
      <div className="flex w-[48px] items-center justify-center">
        <svg width="18" height="16" viewBox="0 0 18 16" fill="none" stroke="#e8eef2" strokeWidth="1.200">
          <path d="M1.500 4.500h10v7h-10zM1 .5v1.500h11V.5M1 15.500V14h11v1.500M15.500 0v3M15.500 8v8" />
          <path d="M15.500 4v3" strokeWidth="2.500" />
        </svg>
      </div>
      <div className="flex w-[53px] flex-col items-center">
        <div className="flex h-[38px] items-center">
          <svg width="22" height="20" viewBox="0 0 22 20">
            <path d="M0 2.500C0 1.500.7 1 1.500 1H8l2 2h10.500c.8 0 1.500.5 1.500 1.500V19H0z" fill="#e9b949" />
            <path d="M0 5h22v14H0z" fill="#fbdf8b" />
            <path d="M4 19v-8h14v8h-3.500v-4h-7v4z" fill="#3fa3d6" />
          </svg>
        </div>
        <div className="h-[2px] w-[40px] bg-[#a4cdee]" />
      </div>
      <div className="flex w-[48px] items-center justify-center">
        <svg width="22" height="22" viewBox="0 0 22 22">
          <circle cx="11" cy="11" r="11" fill="#f6c927" />
          <path d="M11 11 1.500 5.500A11 11 0 0 1 20.500 5.500H11z" fill="#dd4637" />
          <path d="M1.500 5.500A11 11 0 0 0 10 22l5-8.500-4-2.500z" fill="#2da44f" />
          <path d="M20.500 5.500H11v5l4.500 3L10.500 22A11 11 0 0 0 20.500 5.500z" fill="#f8cf33" />
          <circle cx="11" cy="11" r="5" fill="#fff" />
          <circle cx="11" cy="11" r="4" fill="#4587ec" />
        </svg>
      </div>
      <div className="flex w-[48px] flex-col items-center bg-[#33495a]">
        <div className="flex h-[38px] items-center"><MetaLogo size={24} /></div>
        <div className="h-[2px] w-full bg-[#a4cdee]" />
      </div>
      <div className="ml-auto flex items-center">
        <svg width="13" height="8" viewBox="0 0 13 8" fill="none" stroke="#fff" strokeWidth="1.300"><path d="m1 7 5.500-5.500L12 7" /></svg>
        <svg width="17" height="15" viewBox="0 0 17 15" fill="#fff" className="ml-[10px]">
          <path d="M4.500 0 8.500 2.700 4.500 5.400.5 2.700zM12.500 0l4 2.700-4 2.700-4-2.700zM4.500 5.400l4 2.700-4 2.700-4-2.700zM12.500 5.400l4 2.700-4 2.700-4-2.700zM8.500 9l4 2.700-4 2.700-4-2.700z" />
        </svg>
        <svg width="16" height="15" viewBox="0 0 16 15" className="ml-[7px]">
          <ellipse cx="7" cy="8" rx="6.500" ry="5" fill="#4a9e3c" />
          <path d="M2 6c3-5 9-5 12-3L9 8z" fill="#e6c62c" />
          <circle cx="9.500" cy="5.500" r="3" fill="#7fc4ee" />
          <path d="m8 9 7-2-3 5z" fill="#e06a30" />
        </svg>
        <svg width="14" height="14" viewBox="0 0 14 14" fill="none" stroke="#dfe7ea" className="ml-[10px]">
          <path d="M1 12C1 6 6 1.500 13 1.500M4 13c0-4.500 3.500-8 9-8M7 13c0-2.500 2.500-5 6-5" strokeWidth="1.200" />
          <circle cx="11.500" cy="12" r="1.300" fill="#fff" stroke="none" />
        </svg>
        <svg width="15" height="12" viewBox="0 0 15 12" fill="none" stroke="#fff" className="ml-[8px]">
          <path d="M1 4h2.500L7 1v10L3.500 8H1zM10 4l4 4M14 4l-4 4" strokeWidth="1.100" />
        </svg>
        <span className="ml-[11px] w-[26px] text-[12px] tracking-[-0.05em]">ENG</span>
        <div className="ml-[9px] w-[56px] whitespace-nowrap text-center text-[12px] leading-[18px] tracking-[-0.05em]">
          <div>12:43 PM</div>
          <div>9/18/2019</div>
        </div>
        <svg width="26" height="26" viewBox="0 0 26 26" className="ml-[14px] mt-[4px]">
          <path d="M1 3h16v12H8l-3 3v-3H1z" fill="#fff" />
          <path d="M4 6.500h10M4 9h10M4 11.500h7" stroke="#123" />
          <circle cx="16.500" cy="17.500" r="7.200" fill="#3b4347" stroke="#a9b0b3" />
          <text x="13.700" y="21.300" fontSize="10.500" fill="#fff">3</text>
        </svg>
        <div className="ml-[13px] h-[40px] w-[4px] border-l border-[#4d6470]" />
      </div>
    </div>
  );
}

export default function App() {
  return (
    <div className="flex h-[720px] w-[1280px] flex-col overflow-hidden bg-[#f0f0f0] font-['Open_Sans','Noto_Sans','DejaVu_Sans',sans-serif] text-black">
      <TitleBar />
      <MenuBar />
      <Toolbar />
      <div className="flex h-[582px] shrink-0 border-t border-[#fafafa]">
        <div className="flex w-[248px] shrink-0 flex-col border-r border-[#8a8a8a]">
          <MarketWatch />
          <Navigator />
        </div>
        <div className="flex w-[1032px] shrink-0 flex-col">
          <Chart />
          <ChartTabs />
        </div>
      </div>
      <StatusBar />
      <Taskbar />
    </div>
  );
}
